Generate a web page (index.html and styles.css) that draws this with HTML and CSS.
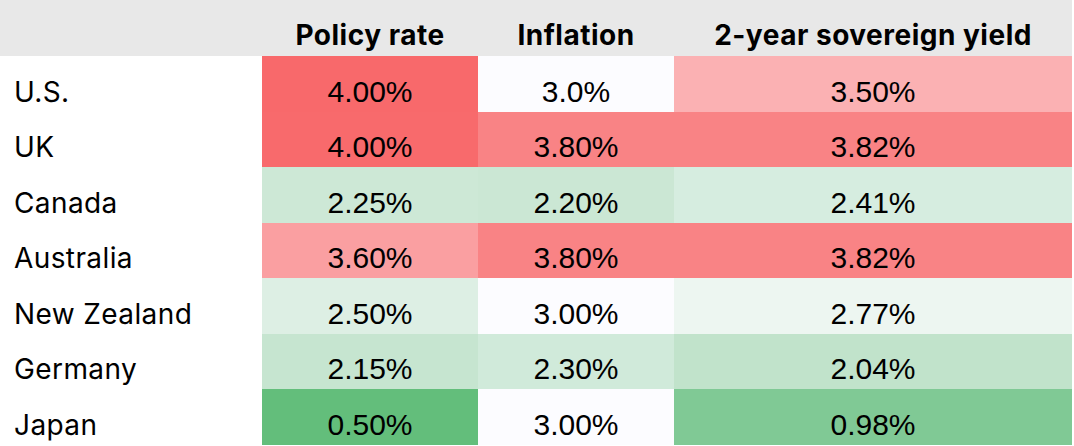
FILE: index.html
```html
<!DOCTYPE html>
<html>
<head>
<meta charset="utf-8">
<link rel="stylesheet" href="styles.css">
</head>
<body>
<div class="table">
  <div class="hcell"></div>
  <div class="hcell">Policy rate</div>
  <div class="hcell">Inflation</div>
  <div class="hcell">2-year sovereign yield</div>

  <div class="label">U.S.</div>
  <div class="num" style="background:#f8696b">4.00%</div>
  <div class="num" style="background:#fcfcff">3.0%</div>
  <div class="num" style="background:#fbb1b3">3.50%</div>

  <div class="label">UK</div>
  <div class="num" style="background:#f86a6c">4.00%</div>
  <div class="num" style="background:#f98385">3.80%</div>
  <div class="num" style="background:#f98385">3.82%</div>

  <div class="label">Canada</div>
  <div class="num" style="background:#cde8d6">2.25%</div>
  <div class="num" style="background:#cbe7d4">2.20%</div>
  <div class="num" style="background:#d6ede0">2.41%</div>

  <div class="label">Australia</div>
  <div class="num" style="background:#fa9fa1">3.60%</div>
  <div class="num" style="background:#f98385">3.80%</div>
  <div class="num" style="background:#f98385">3.82%</div>

  <div class="label">New Zealand</div>
  <div class="num" style="background:#ddefe4">2.50%</div>
  <div class="num" style="background:#fcfcff">3.00%</div>
  <div class="num" style="background:#edf6f1">2.77%</div>

  <div class="label">Germany</div>
  <div class="num" style="background:#c6e5d0">2.15%</div>
  <div class="num" style="background:#d0eada">2.30%</div>
  <div class="num" style="background:#c1e3cb">2.04%</div>

  <div class="label">Japan</div>
  <div class="num" style="background:#63be7b">0.50%</div>
  <div class="num" style="background:#fcfcff">3.00%</div>
  <div class="num" style="background:#80c995">0.98%</div>
</div>
</body>
</html>
```

FILE: styles.css
```css
html, body {
  margin: 0;
  padding: 0;
  background: #ffffff;
}

.table {
  display: grid;
  width: 1072px;
  grid-template-columns: 262px 216px 196px 398px;
  grid-template-rows: 56px repeat(7, 55.5px);
  color: #000000;
}

.hcell {
  background: #e8e8e8;
  font-family: Inter, "Liberation Sans", sans-serif;
  font-weight: 700;
  font-size: 28px;
  letter-spacing: 0.5px;
  line-height: 34px;
  display: flex;
  align-items: flex-end;
  justify-content: center;
  padding-bottom: 4px;
  box-sizing: border-box;
  white-space: nowrap;
}

.label {
  font-family: Inter, "Liberation Sans", sans-serif;
  font-size: 28px;
  letter-spacing: 0.4px;
  line-height: 34px;
  display: flex;
  align-items: flex-end;
  padding-left: 14px;
  padding-bottom: 3px;
  box-sizing: border-box;
  white-space: nowrap;
}

.num {
  font-family: "Liberation Sans", Arial, sans-serif;
  font-size: 30px;
  line-height: 34px;
  display: flex;
  align-items: flex-end;
  justify-content: center;
  padding-bottom: 3px;
  box-sizing: border-box;
  white-space: nowrap;
}
```
